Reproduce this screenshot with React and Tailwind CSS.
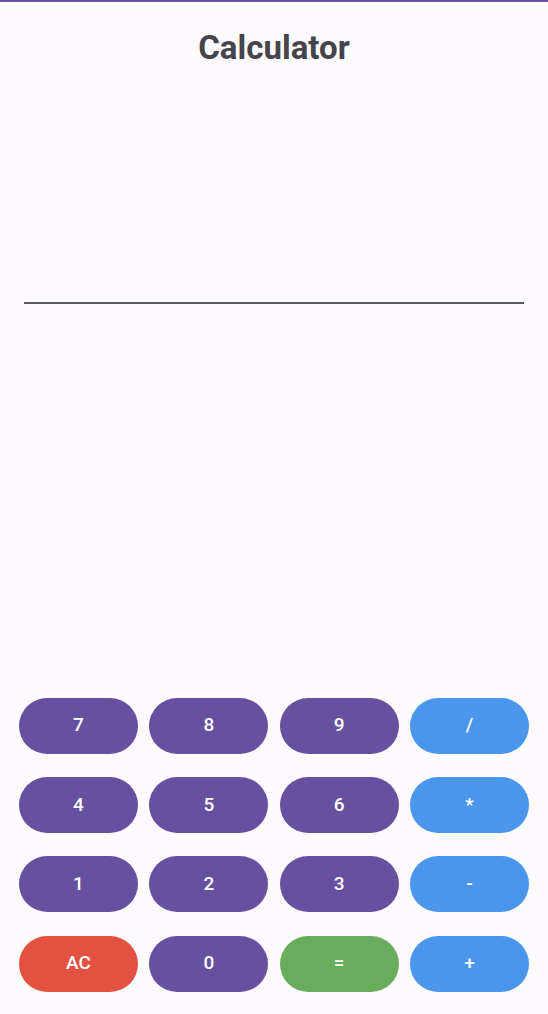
const keys = [
  ["7", "num"], ["8", "num"], ["9", "num"], ["/", "op"],
  ["4", "num"], ["5", "num"], ["6", "num"], ["*", "op"],
  ["1", "num"], ["2", "num"], ["3", "num"], ["-", "op"],
  ["AC", "clear"], ["0", "num"], ["=", "eq"], ["+", "op"],
];

const tones = {
  num: "bg-[#6551a0]",
  op: "bg-[#4a96ec]",
  clear: "bg-[#e35241]",
  eq: "bg-[#69ad5c]",
};

export default function App() {
  return (
    <div
      className="flex h-[1014px] w-full flex-col border-t-2 border-[#6750a4] bg-[#fdfbfe]"
      style={{ fontFamily: "Roboto, 'Liberation Sans', sans-serif" }}
    >
      <h1 className="pt-[26px] text-center text-[33px] font-bold leading-[40px] text-[#45434b]">
        Calculator
      </h1>

      {/* result display */}
      <div className="mx-[24px] mt-[234px] h-[2px] bg-[#5b5a5f]"></div>

      <div className="flex-1"></div>

      <div className="grid grid-cols-4 gap-x-[11.3px] gap-y-[23.3px] px-[19px] pb-[22.5px]">
        {keys.map(([label, kind]) => (
          <button
            key={label}
            className={`h-[56px] rounded-full text-[19px] font-medium text-white ${tones[kind]}`}
          >
            {label}
          </button>
        ))}
      </div>
    </div>
  );
}
